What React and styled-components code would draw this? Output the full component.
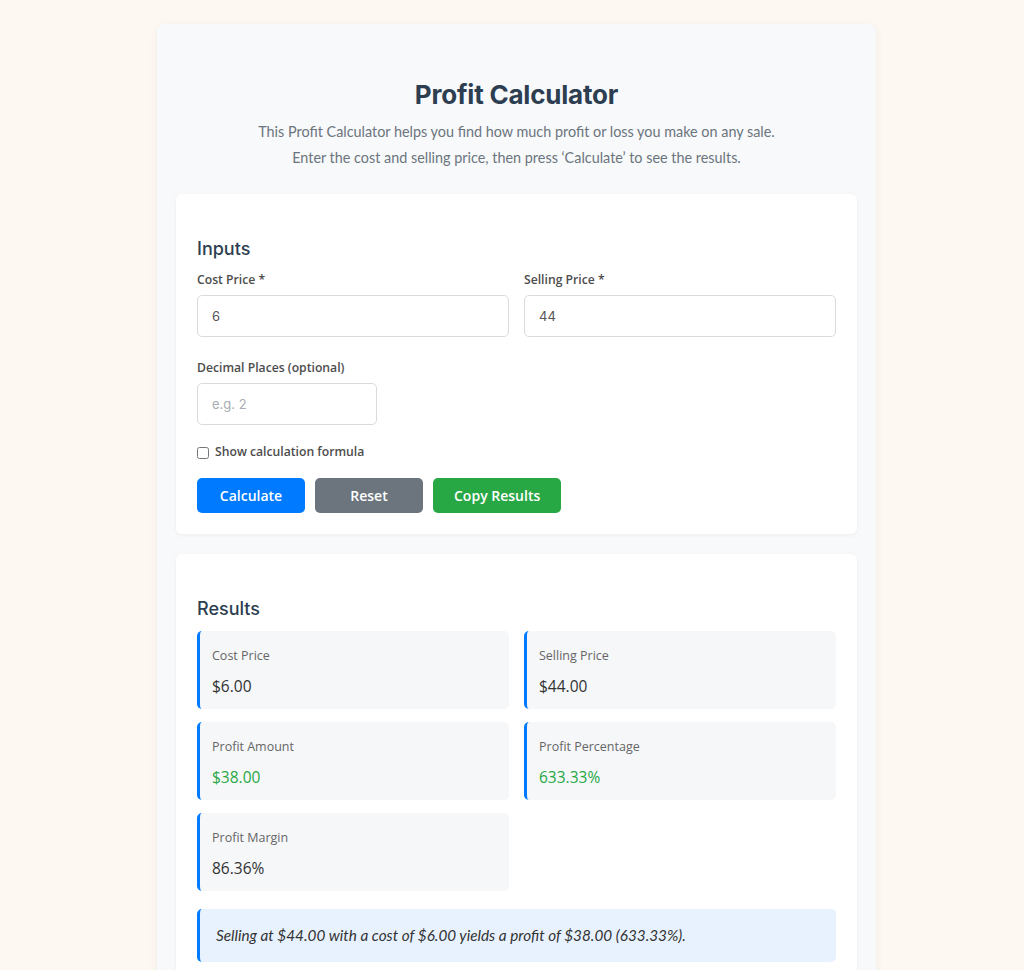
import React, { useState } from "react";
import styled, { createGlobalStyle } from "styled-components";

const GlobalStyle = createGlobalStyle`
  html, body {
    margin: 0;
    padding: 0;
    background: #fdf8f2;
  }
  * {
    box-sizing: border-box;
  }
`;

const Page = styled.div`
  min-height: 970px;
  padding: 24px 0 0 9px;
  font-family: "Open Sans", "Noto Sans", sans-serif;
`;

const Container = styled.div`
  width: 719px;
  margin: 0 auto;
  background: #f7f9fb;
  border-radius: 8px;
  box-shadow: 0 2px 10px rgba(0, 0, 0, 0.06);
  padding: 55px 19px 20px;
`;

const Title = styled.h1`
  margin: 0;
  text-align: center;
  font-family: "Inter", "Roboto", sans-serif;
  font-weight: 700;
  font-size: 26px;
  line-height: 32px;
  color: #2c3e50;
  letter-spacing: -0.2px;
`;

const Intro = styled.p`
  margin: 8px 0 23px;
  text-align: center;
  font-family: "Lato", sans-serif;
  font-size: 14.4px;
  line-height: 26px;
  color: #6c757d;
`;

const Card = styled.section`
  background: #fff;
  border-radius: 6px;
  box-shadow: 0 1px 4px rgba(0, 0, 0, 0.05);
  padding: 42px 21px 21px;
  & + & {
    margin-top: 20px;
  }
`;

const CardTitle = styled.h2`
  margin: 0 0 10px;
  font-family: "Inter", "Roboto", sans-serif;
  font-weight: 500;
  font-size: 18px;
  line-height: 25px;
  color: #2c3e50;
`;

const FieldRow = styled.div`
  display: grid;
  grid-template-columns: ${(p) => p.columns || "1fr 1fr"};
  gap: 15px;
  margin-bottom: 22px;
`;

const Field = styled.label`
  display: flex;
  flex-direction: column;
  gap: 6px;
`;

const Label = styled.span`
  font-size: 12.2px;
  line-height: 18px;
  font-weight: 600;
  color: #4d4d4d;
`;

const Input = styled.input`
  height: 42px;
  width: 100%;
  padding: 0 14px;
  border: 1.5px solid #d9dcdf;
  border-radius: 5px;
  font-family: "Inter", "Roboto", sans-serif;
  font-size: 13px;
  color: #555;
  background: #fff;
  outline: none;
  &::placeholder {
    color: #a8adb2;
  }
`;

const CheckRow = styled.label`
  display: flex;
  align-items: center;
  gap: 6px;
  margin: -5px 0 18px;
  height: 18px;
  font-size: 12.2px;
  font-weight: 600;
  color: #4d4d4d;
  input {
    margin: 3px 0 0;
    width: 12px;
    height: 12px;
  }
`;

const Buttons = styled.div`
  display: flex;
  gap: 10px;
`;

const Button = styled.button`
  height: 35px;
  min-width: 108px;
  padding: 0 21px;
  border: none;
  border-radius: 5px;
  background: ${(p) => p.bg};
  color: #fff;
  font-family: "Open Sans", sans-serif;
  font-size: 14px;
  font-weight: 600;
  cursor: pointer;
`;

const ResultGrid = styled.div`
  display: grid;
  grid-template-columns: 1fr 1fr;
  column-gap: 15px;
  row-gap: 13px;
`;

const ResultItem = styled.div`
  background: #f5f7f9;
  border-left: 3px solid #007bff;
  border-radius: 5px;
  padding: 16px 12px 12px;
`;

const ResultLabel = styled.div`
  font-size: 12.5px;
  line-height: 18px;
  color: #666;
  margin-bottom: 10px;
`;

const ResultValue = styled.div`
  font-size: 15.5px;
  line-height: 22px;
  font-weight: 500;
  color: ${(p) => (p.positive ? "#28a745" : "#333")};
`;

const Summary = styled.div`
  margin-top: 18px;
  background: #e7f2fe;
  border-left: 3px solid #007bff;
  border-radius: 5px;
  padding: 15px 16px 16px;
  font-family: "Lato", sans-serif;
  font-style: italic;
  font-size: 15.3px;
  line-height: 22px;
  color: #333;
`;

const fmt = (n) => "$" + n.toFixed(2);

export default function App() {
  const [cost, setCost] = useState("6");
  const [sell, setSell] = useState("44");
  const [decimals, setDecimals] = useState("");

  const c = parseFloat(cost) || 0;
  const s = parseFloat(sell) || 0;
  const profit = s - c;
  const pct = c ? (profit / c) * 100 : 0;
  const margin = s ? (profit / s) * 100 : 0;

  const results = [
    { label: "Cost Price", value: fmt(c) },
    { label: "Selling Price", value: fmt(s) },
    { label: "Profit Amount", value: fmt(profit), positive: profit > 0 },
    { label: "Profit Percentage", value: pct.toFixed(2) + "%", positive: profit > 0 },
    { label: "Profit Margin", value: margin.toFixed(2) + "%" },
  ];

  return (
    <Page>
      <GlobalStyle />
      <Container>
        <Title>Profit Calculator</Title>
        <Intro>
          This Profit Calculator helps you find how much profit or loss you make on any sale.
          <br />
          Enter the cost and selling price, then press ‘Calculate’ to see the results.
        </Intro>

        <Card>
          <CardTitle>Inputs</CardTitle>
          <FieldRow>
            <Field>
              <Label>Cost Price *</Label>
              <Input value={cost} onChange={(e) => setCost(e.target.value)} />
            </Field>
            <Field>
              <Label>Selling Price *</Label>
              <Input value={sell} onChange={(e) => setSell(e.target.value)} />
            </Field>
          </FieldRow>
          <FieldRow columns="180px">
            <Field>
              <Label>Decimal Places (optional)</Label>
              <Input
                placeholder="e.g. 2"
                value={decimals}
                onChange={(e) => setDecimals(e.target.value)}
              />
            </Field>
          </FieldRow>
          <CheckRow>
            <input type="checkbox" />
            Show calculation formula
          </CheckRow>
          <Buttons>
            <Button bg="#007bff">Calculate</Button>
            <Button bg="#6c757d">Reset</Button>
            <Button bg="#28a745">Copy Results</Button>
          </Buttons>
        </Card>

        <Card>
          <CardTitle>Results</CardTitle>
          <ResultGrid>
            {results.map((r) => (
              <ResultItem key={r.label}>
                <ResultLabel>{r.label}</ResultLabel>
                <ResultValue positive={r.positive}>{r.value}</ResultValue>
              </ResultItem>
            ))}
          </ResultGrid>
          <Summary>
            Selling at {fmt(s)} with a cost of {fmt(c)} yields a profit of {fmt(profit)} (
            {pct.toFixed(2)}%).
          </Summary>
        </Card>
      </Container>
    </Page>
  );
}
